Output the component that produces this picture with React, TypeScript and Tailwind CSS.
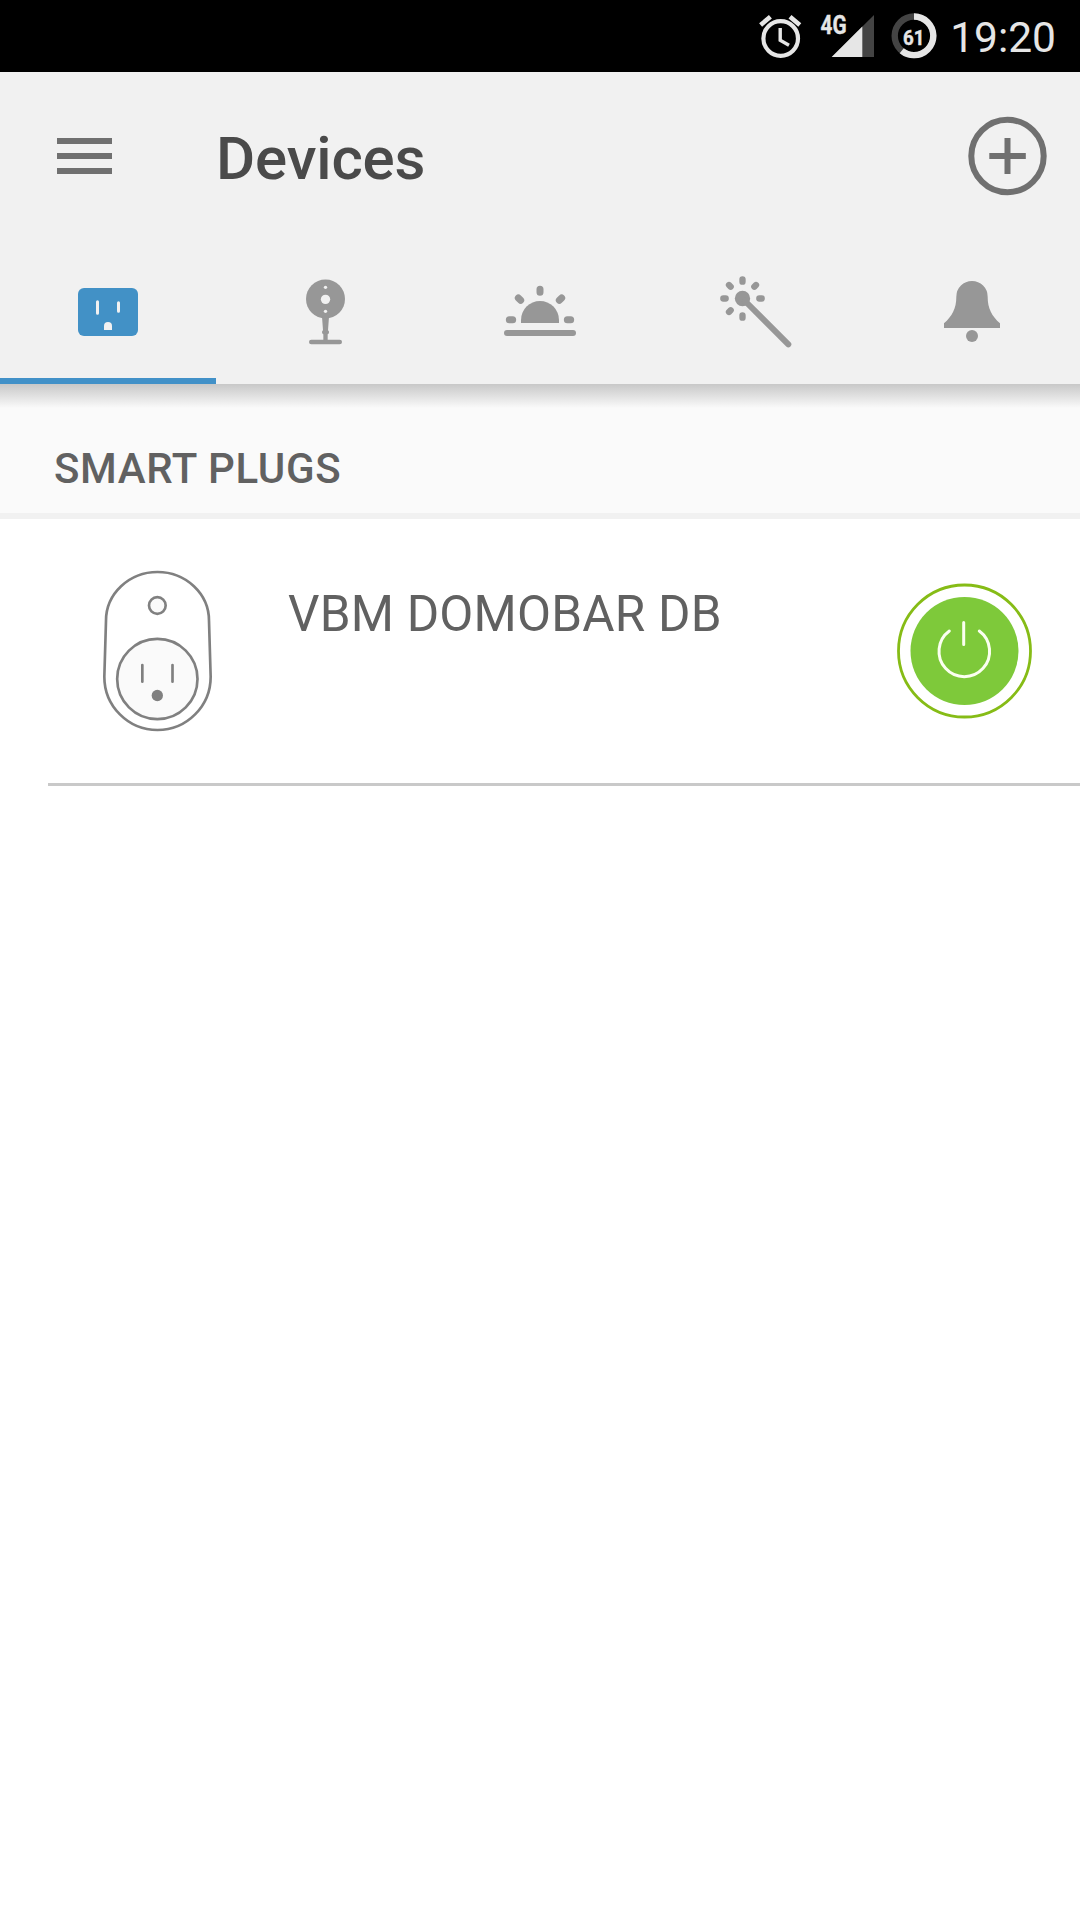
import React, { useState } from 'react';

const TABS = ['plugs', 'cameras', 'scenes', 'rules', 'alerts'] as const;
type Tab = (typeof TABS)[number];

const StatusBar: React.FC = () => (
    <div className="h-[72px] bg-black text-[#e6e6e6] flex items-center justify-end pr-6">
        {/* Alarm */}
        <svg width="44" height="48" viewBox="0 0 44 48" fill="none" stroke="#e6e6e6">
            <circle cx="21.7" cy="26.5" r="17.3" strokeWidth="4.2" />
            <path d="M21.2 16V28.2L30 33.2" strokeWidth="3.4" />
            <path d="M1.6 13L11.4 4.8M31 4.8L40.8 13" strokeWidth="4.6" />
        </svg>

        {/* Signal */}
        <svg width="56" height="60" viewBox="0 -6 56 60" className="ml-[17px]">
            <path d="M54 3V45H11.7Z" fill="#444444" />
            <path d="M42.3 14.6V45H11.7Z" fill="#e6e6e6" />
            <text x="0.6" y="21.6" fontSize="25" fontWeight="700" fill="#e6e6e6" stroke="#e6e6e6" strokeWidth="0.4" textLength="26" lengthAdjust="spacingAndGlyphs">4G</text>
        </svg>

        {/* Battery */}
        <svg width="48" height="48" viewBox="0 0 48 48" className="ml-[14px]" fill="none">
            <circle cx="24" cy="23.8" r="19.3" stroke="#444444" strokeWidth="6.4" />
            <circle cx="24" cy="23.8" r="19.3" stroke="#e6e6e6" strokeWidth="6.4" pathLength="100" strokeDasharray="61 39" transform="rotate(-90 24 23.8)" />
            <text x="13" y="33" fontSize="21" fontWeight="700" fill="#e6e6e6" stroke="#e6e6e6" strokeWidth="0.4" textLength="21.5" lengthAdjust="spacingAndGlyphs">61</text>
        </svg>

        <span className="ml-[12px] text-[42.5px] leading-[72px] pt-1">19:20</span>
    </div>
);

const TabIcon: React.FC<{ tab: Tab }> = ({ tab }) => {
    switch (tab) {
        case 'plugs':
            return (
                <svg width="120" height="100" viewBox="-6 0 360 300">
                    <rect x="84" y="84" width="180" height="144" rx="18" fill="#4291c6" />
                    <path d="M142.500 125V160M205.500 128V154" stroke="#f1f1f1" strokeWidth="9" strokeLinecap="round" />
                    <path d="M162 210V198a12 12 0 0 1 24 0V210Z" fill="#f1f1f1" />
                </svg>
            );
        case 'cameras':
            return (
                <svg width="120" height="100" viewBox="-18 0 360 300" fill="#979797">
                    <circle cx="166.500" cy="117" r="58.500" />
                    <path d="M156 170H177L174 211Q178 213 177 218Q176 222 173 223V242H160V223Q156 222 156 217Q156 213 159 211Z" />
                    <rect x="117" y="239" width="99" height="14" rx="7" />
                    <circle cx="166.500" cy="118" r="14" fill="#f1f1f1" />
                    <circle cx="166.500" cy="82" r="5" fill="#f1f1f1" />
                    <circle cx="166.500" cy="154" r="5" fill="#f1f1f1" />
                </svg>
            );
        case 'scenes':
            return (
                <svg width="120" height="100" viewBox="0 0 360 300" fill="#979797">
                    <path d="M123 189V180a57 57 0 0 1 114 0V189Z" />
                    <rect x="72" y="210" width="216" height="18" rx="9" />
                    <path d="M180 88V97M115 114L122 121M245 114L238 121M88 179.500H98M262 179.500H272" stroke="#979797" strokeWidth="21" strokeLinecap="round" />
                </svg>
            );
        case 'rules':
            return (
                <svg width="120" height="100" viewBox="-12 0 360 300" fill="#979797" stroke="#979797" strokeLinecap="round">
                    <circle cx="127.500" cy="115.500" r="23" stroke="none" />
                    <path d="M135 123L265 253" strokeWidth="18" />
                    <path d="M127.500 58V65M127.500 166V173M70 115.500H77M178 115.500H185M87 75L92 80M168 75L163 80M92 151L87 156" strokeWidth="19" />
                </svg>
            );
        case 'alerts':
            return (
                <svg width="120" height="100" viewBox="-24 0 360 300" fill="#979797">
                    <path d="M72 204V190C96 168 109 146 109 110A47 47 0 0 1 203 110C203 146 216 168 240 190V204Z" />
                    <circle cx="156" cy="228" r="18" />
                </svg>
            );
    }
};

const PlugIcon: React.FC = () => (
    <svg width="112" height="164" viewBox="63 60 336 492" fill="none" stroke="#808080" strokeWidth="8">
        <path d="M78 212A154.500 146 0 0 1 387 212L392 380A159.500 160 0 0 1 73 380Z" fill="#ffffff" />
        <circle cx="232" cy="166.500" r="25" fill="#fafafa" />
        <circle cx="232" cy="387" r="120.500" fill="#fafafa" />
        <path d="M187 345V395M277.500 345V395" strokeLinecap="round" />
        <circle cx="232" cy="436.500" r="17" fill="#808080" stroke="none" />
    </svg>
);

const PowerIcon: React.FC = () => (
    <svg width="136" height="136" viewBox="0 0 136 136" fill="none">
        <circle cx="68.500" cy="68" r="66" stroke="#86bc16" strokeWidth="2.800" />
        <circle cx="68.500" cy="68" r="54" fill="#7ec93a" />
        <path d="M53.300 48A25.300 25.300 0 1 0 83.300 48M67.700 39.500V61.500" stroke="#fbfff0" strokeWidth="3" strokeLinecap="round" />
    </svg>
);

const App: React.FC = () => {
    const [active, setActive] = useState<Tab>('plugs');

    return (
        <div className="w-[1080px] h-[1920px] bg-white overflow-hidden select-none font-['Roboto',sans-serif]">
            <StatusBar />

            {/* App bar */}
            <header className="h-[312px] bg-[#f1f1f1] flex flex-col">
                <div className="h-[168px] flex items-center pl-[57px] pr-8">
                    <button className="w-[55px] flex flex-col gap-[9px]">
                        <span className="h-1.5 w-full bg-[#707070]" />
                        <span className="h-1.5 w-full bg-[#707070]" />
                        <span className="h-1.5 w-full bg-[#707070]" />
                    </button>
                    <h1 className="ml-[104px] flex-1 text-[60px] leading-[70px] tracking-[-0.15px] font-medium text-[#4a4a4a] pt-1.5">Devices</h1>
                    <button>
                        <svg width="81" height="80" viewBox="0 0 81 80" fill="none" stroke="#707070" strokeWidth="6">
                            <circle cx="40.500" cy="40" r="36.200" />
                            <path d="M22.300 40H58.800M40.500 22V58" />
                        </svg>
                    </button>
                </div>

                <nav className="h-36 flex">
                    {TABS.map(tab => (
                        <button
                            key={tab}
                            onClick={() => setActive(tab)}
                            className={`w-[216px] pt-5 flex justify-center items-start border-b-6 ${active === tab ? 'border-[#4291c8]' : 'border-transparent'}`}
                        >
                            <TabIcon tab={tab} />
                        </button>
                    ))}
                </nav>
            </header>

            {/* Section title */}
            <section className="h-[135px] bg-[#fafafa] border-b-6 border-[#f1f1f1]">
                <div className="h-6 bg-linear-to-b from-[#c8c8c8] to-[#fafafa]" />
                <h2 className="pl-[54px] pt-[36px] text-[42px] leading-[50px] tracking-[0.6px] font-medium text-[#616161]">SMART PLUGS</h2>
            </section>

            {/* Device row */}
            <div className="ml-12 h-[267px] flex items-start border-b-3 border-[#c9c9c9]">
                <div className="ml-[53px] pt-[51px]">
                    <PlugIcon />
                </div>
                <span className="ml-[75px] flex-1 pt-[65px] text-[49.5px] leading-[60px] tracking-[0.2px] text-[#616161]">VBM DOMOBAR DB</span>
                <button className="mr-12 pt-[64px]">
                    <PowerIcon />
                </button>
            </div>
        </div>
    );
};

export default App;
